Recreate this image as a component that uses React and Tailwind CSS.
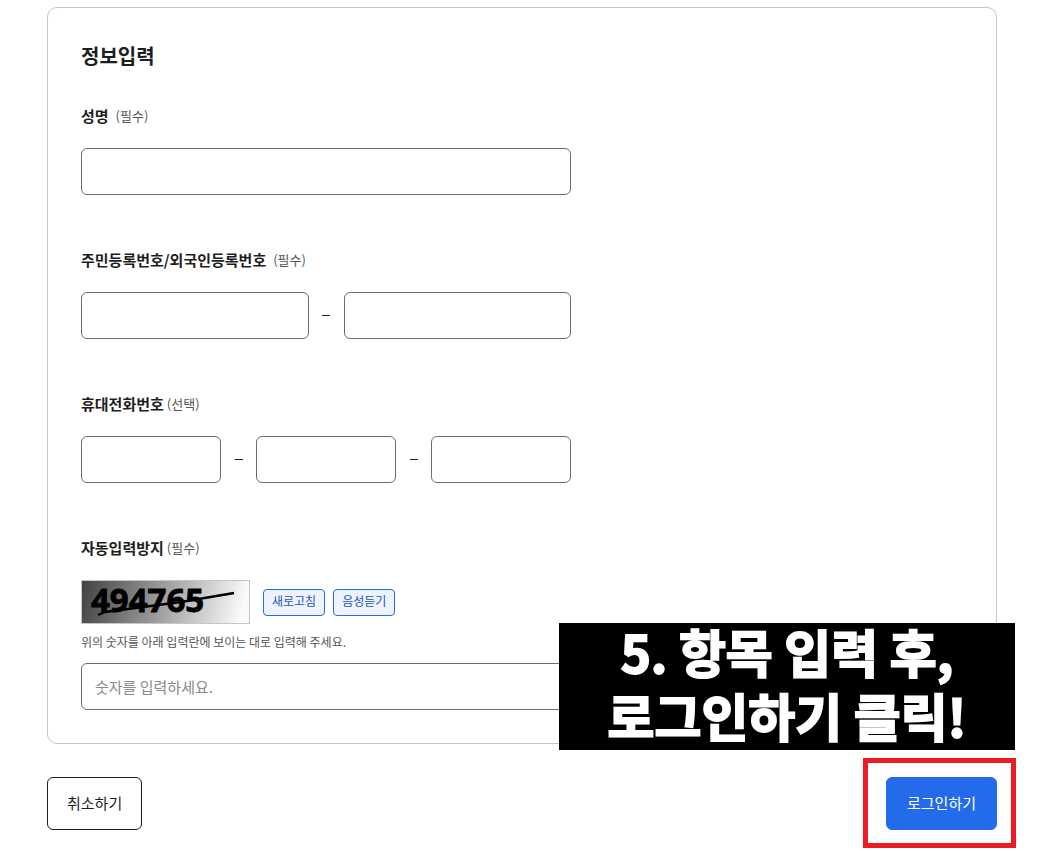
const fieldClass =
  "h-[47px] w-full min-w-0 rounded-md border border-[#6d6d6d] bg-white px-[13px] text-[15px] text-[#1e1e1e] placeholder:text-[#8a8a8a] outline-none focus:border-[#246beb]";

function FieldLabel({ htmlFor, id, text, hint, wide }) {
  const Tag = htmlFor ? "label" : "div";
  return (
    <Tag
      htmlFor={htmlFor}
      id={id}
      className={wide ? "mb-5 flex items-center gap-[7px] leading-6" : "mb-5 flex items-center gap-[3px] leading-6"}
    >
      <span className="text-[15px] font-bold">{text}</span>
      <span className="text-[13px] text-[#555]">{hint}</span>
    </Tag>
  );
}

function Dash() {
  return (
    <span aria-hidden="true" className="flex w-[35px] shrink-0 justify-center">
      <span className="h-px w-2 bg-[#1e1e1e]" />
    </span>
  );
}

function SplitField({ id, label, hint, wide, parts }) {
  return (
    <div role="group" aria-labelledby={id}>
      <FieldLabel id={id} text={label} hint={hint} wide={wide} />
      <div className="flex items-center">
        {parts.map((part, index) => (
          <div key={part} className="contents">
            {index > 0 && <Dash />}
            <input type="text" aria-label={part} className={fieldClass} />
          </div>
        ))}
      </div>
    </div>
  );
}

function CaptchaImage() {
  return (
    <svg viewBox="0 0 169 44" className="h-11 w-[169px] shrink-0 overflow-visible">
      <defs>
        <linearGradient id="captcha-bg" gradientUnits="userSpaceOnUse" x1="0" y1="0" x2="159" y2="40">
          <stop offset="0" stopColor="#404040" />
          <stop offset="1" stopColor="#fafafa" />
        </linearGradient>
      </defs>
      <rect x="0.5" y="0.5" width="168" height="43" fill="url(#captcha-bg)" stroke="#c6c6c6" />
      <text x="10" y="32" fontFamily="'Open Sans', sans-serif" fontWeight="700" fontSize="33" fill="#000" stroke="#000" strokeWidth="0.8">
        494765
      </text>
      <path d="M17 35 L24 32 L100 22 L153 13" fill="none" stroke="#000" strokeWidth="2.4" />
    </svg>
  );
}

function SmallButton({ children }) {
  return (
    <button
      type="button"
      className="h-[27px] rounded border border-[#246beb] bg-[#edf4ff] px-2 pb-0.5 text-xs leading-none text-[#1d56bc]"
    >
      {children}
    </button>
  );
}

export default function App() {
  return (
    <main className="bg-white pt-[7px] pr-[52px] pb-5 pl-[47px] font-['Noto_Sans_CJK_KR',sans-serif] text-[#1e1e1e]">
      <form onSubmit={(e) => e.preventDefault()}>
        <section className="relative rounded-[10px] border border-[#c6c6c6] p-[33px]">
          <h2 className="mb-[33px] text-xl leading-[30px] font-bold">정보입력</h2>

          <div className="flex max-w-[490px] flex-col gap-[53px]">
            <div>
              <FieldLabel htmlFor="name" text="성명" hint="(필수)" wide />
              <input id="name" type="text" className={fieldClass} />
            </div>

            <SplitField
              id="resident-number"
              label="주민등록번호/외국인등록번호"
              hint="(필수)"
              wide
              parts={["등록번호 앞자리", "등록번호 뒷자리"]}
            />

            <SplitField
              id="phone"
              label="휴대전화번호"
              hint="(선택)"
              parts={["전화번호 앞자리", "전화번호 중간자리", "전화번호 끝자리"]}
            />

            <div>
              <FieldLabel htmlFor="captcha" text="자동입력방지" hint="(필수)" />
              <div className="flex items-center">
                <CaptchaImage />
                <div className="ml-[13px] flex gap-2">
                  <SmallButton>새로고침</SmallButton>
                  <SmallButton>음성듣기</SmallButton>
                </div>
              </div>
              <p className="mt-2 mb-[11px] text-xs leading-5 text-[#555]">
                위의 숫자를 아래 입력란에 보이는 대로 입력해 주세요.
              </p>
              <input id="captcha" type="text" placeholder="숫자를 입력하세요." className={fieldClass} />
            </div>
          </div>

          <div className="absolute -right-[19px] -bottom-[7px] flex h-[127px] w-[456px] flex-col gap-2 bg-black text-center text-[51px] leading-[56px] font-bold whitespace-nowrap text-white [-webkit-text-stroke:2px_white]">
            <p>5. 항목 입력 후,</p>
            <p>로그인하기 클릭!</p>
          </div>
        </section>

        <div className="mt-[33px] flex justify-between">
          <button type="button" className="h-[53px] rounded-md border border-[#1e1e1e] px-[19px] text-[15px]">
            취소하기
          </button>
          <div className="relative">
            <button
              type="submit"
              className="h-[53px] rounded-md border border-[#246beb] bg-[#246beb] px-5 text-[15px] text-white"
            >
              로그인하기
            </button>
            <div className="pointer-events-none absolute -top-[19px] -right-[19px] -bottom-[18px] -left-[23px] border-5 border-[#ed1c24]" />
          </div>
        </div>
      </form>
    </main>
  );
}
